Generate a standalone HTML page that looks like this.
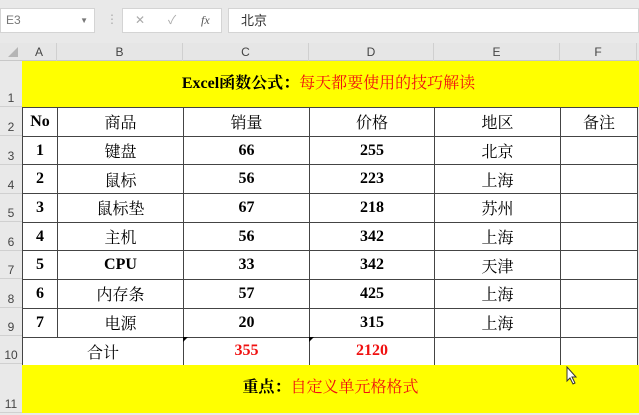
<!DOCTYPE html>
<html><head><meta charset="utf-8"><style>
*{margin:0;padding:0;box-sizing:border-box}
body{width:639px;height:415px;overflow:hidden;background:#e9e9e9;font-family:"Liberation Serif","Noto Serif CJK SC",serif;position:relative}
.abs{position:absolute}
.box{background:#fff;border:1px solid #d4d4d4}
.ui{font-family:"Liberation Sans","Noto Sans CJK SC",sans-serif;color:#555;font-size:12px}
.colh{position:absolute;top:43px;height:18px;text-align:center;line-height:18px;font-family:"Liberation Sans",sans-serif;font-size:12px;color:#444;border-right:1px solid #d0d0d0}
.rowh{position:absolute;left:0;width:22px;font-family:"Liberation Sans",sans-serif;font-size:12px;color:#444;text-align:center;border-bottom:1px solid #d0d0d0;display:flex;align-items:flex-end;justify-content:center;padding-bottom:1px}
table{position:absolute;left:22px;top:107px;border-collapse:collapse;background:#fff}
td{border:1px solid #444;height:28.7px;padding:0;text-align:center;font-size:16px;font-weight:bold;color:#000;vertical-align:middle}
td.n{font-weight:normal}
.red{color:#f01010}
</style></head><body>
<div class="abs box ui" style="left:0;top:8px;width:95px;height:25px;line-height:23px;padding-left:5px;color:#777">E3<span style="position:absolute;right:6px;top:0;font-size:8px">▼</span></div>
<div class="abs ui" style="left:106px;top:12px;color:#aaa;font-size:12px">⋮</div>
<div class="abs box ui" style="left:122px;top:8px;width:100px;height:25px;line-height:23px;color:#aaa"><span style="position:absolute;left:12px">✕</span><span style="position:absolute;left:45px">✓</span><span style="position:absolute;left:78px;color:#555;font-style:italic;font-family:'Liberation Serif',serif">fx</span></div>
<div class="abs box ui" style="left:228px;top:8px;width:411px;height:25px;line-height:23px;padding-left:12px;color:#333;font-size:13px">北京</div>
<div class="abs" style="left:0;top:43px;width:639px;height:18px;background:#e6e6e6;border-bottom:1px solid #c8c8c8"></div>
<div class="abs" style="left:8px;top:47px;width:0;height:0;border-left:10px solid transparent;border-bottom:10px solid #b5b5b5"></div>
<div class="colh" style="left:22px;width:35px">A</div>
<div class="colh" style="left:57px;width:126px">B</div>
<div class="colh" style="left:183px;width:126px">C</div>
<div class="colh" style="left:309px;width:125px">D</div>
<div class="colh" style="left:434px;width:126px">E</div>
<div class="colh" style="left:560px;width:77px">F</div>
<div class="rowh" style="top:61px;height:46px">1</div>
<div class="rowh" style="top:107px;height:29px">2</div>
<div class="rowh" style="top:136px;height:29px">3</div>
<div class="rowh" style="top:165px;height:29px">4</div>
<div class="rowh" style="top:194px;height:28px">5</div>
<div class="rowh" style="top:222px;height:29px">6</div>
<div class="rowh" style="top:251px;height:28px">7</div>
<div class="rowh" style="top:279px;height:29px">8</div>
<div class="rowh" style="top:308px;height:28px">9</div>
<div class="rowh" style="top:336px;height:28px">10</div>
<div class="rowh" style="top:364px;height:49px">11</div>
<div class="abs" style="left:22px;top:61px;width:617px;height:46px;background:#ffff00;text-align:center;line-height:46px;font-size:16px;font-weight:bold;padding-right:4px">Excel函数公式：<span class="red" style="font-weight:normal">每天都要使用的技巧解读</span></div>
<table>
<colgroup><col style="width:35px"><col style="width:126px"><col style="width:126px"><col style="width:125px"><col style="width:126px"><col style="width:77px"></colgroup>
<tr><td>No</td><td class="n">商品</td><td class="n">销量</td><td class="n">价格</td><td class="n">地区</td><td class="n">备注</td></tr>
<tr><td>1</td><td class="n">键盘</td><td>66</td><td>255</td><td class="n">北京</td><td></td></tr>
<tr><td>2</td><td class="n">鼠标</td><td>56</td><td>223</td><td class="n">上海</td><td></td></tr>
<tr><td>3</td><td class="n">鼠标垫</td><td>67</td><td>218</td><td class="n">苏州</td><td></td></tr>
<tr><td>4</td><td class="n">主机</td><td>56</td><td>342</td><td class="n">上海</td><td></td></tr>
<tr><td>5</td><td>CPU</td><td>33</td><td>342</td><td class="n">天津</td><td></td></tr>
<tr><td>6</td><td class="n">内存条</td><td>57</td><td>425</td><td class="n">上海</td><td></td></tr>
<tr><td>7</td><td class="n">电源</td><td>20</td><td>315</td><td class="n">上海</td><td></td></tr>
<tr><td colspan="2" class="n">合计</td><td class="red">355</td><td class="red">2120</td><td></td><td></td></tr>
</table>
<div class="abs" style="left:183px;top:337px;border-top:5px solid #000;border-right:5px solid transparent"></div>
<div class="abs" style="left:309px;top:337px;border-top:5px solid #000;border-right:5px solid transparent"></div>
<div class="abs" style="left:22px;top:365px;width:617px;height:48px;background:#ffff00;text-align:center;line-height:46px;font-size:16px;font-weight:bold">重点：<span class="red" style="font-weight:normal">自定义单元格格式</span></div>
<svg class="abs" style="left:566px;top:366px" width="12" height="20" viewBox="0 0 12 20"><path d="M1 1 L1 15 L4 12 L7 18 L9 17 L6 11 L10 11 Z" fill="#fff" stroke="#333" stroke-width="1"/></svg>
</body></html>
